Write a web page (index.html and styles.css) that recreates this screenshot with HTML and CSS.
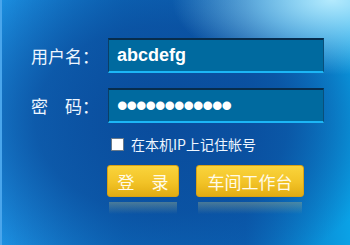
FILE: index.html
```html
<!DOCTYPE html>
<html lang="zh-CN">

<head>
    <meta charset="UTF-8">
    <meta name="viewport" content="width=device-width, initial-scale=1.0">
    <title>登录</title>
    <link rel="stylesheet" href="styles.css">
</head>

<body>

    <!-- Login Panel -->
    <div class="login-panel">
        <form class="login-form">
            <div class="field-row">
                <label class="field-label" for="username">用户名：</label>
                <input class="field-input" id="username" type="text" value="abcdefg">
            </div>
            <div class="field-row">
                <label class="field-label" for="password">密　码：</label>
                <input class="field-input password" id="password" type="password" value="abcdefghijkl">
            </div>
            <div class="remember-row">
                <label class="remember">
                    <input type="checkbox" class="remember-box">
                    <span>在本机IP上记住帐号</span>
                </label>
            </div>
            <div class="button-row">
                <button type="button" class="btn btn-login">登　录</button>
                <button type="button" class="btn btn-workshop">车间工作台</button>
            </div>
        </form>
    </div>

</body>

</html>
```

FILE: styles.css
```css
/* General Styles */
body {
    font-family: "Noto Sans CJK SC", "Liberation Sans", sans-serif;
    margin: 0;
    padding: 0;
}

.login-panel {
    width: 348px;
    height: 245px;
    border-left: 2px solid #4aa6ec;
    overflow: hidden;
    background:
        radial-gradient(ellipse 160px 75px at 330px 0, #b4eafd 0%, rgba(150, 220, 250, 0.65) 45%, rgba(120, 200, 245, 0) 100%),
        radial-gradient(ellipse 230px 170px at 160px 120px, #0a4c9c 0%, rgba(10, 76, 156, 0.75) 55%, rgba(10, 76, 156, 0) 100%),
        linear-gradient(to right, #1c8fe0 0%, #0d6cbd 35%, #0b62b4 70%, #0aa2e6 100%);
}

.login-form {
    padding: 38px 0 0 29px;
}

/* Fields */
.field-row {
    display: flex;
    align-items: center;
    margin-bottom: 15px;
}

.field-label {
    width: 77px;
    color: #eef6ff;
    font-size: 17px;
    line-height: 34px;
}

.field-input {
    box-sizing: border-box;
    width: 216px;
    height: 35px;
    padding: 0 8px;
    background-color: #006a9f;
    border: none;
    border-top: 2px solid #062c4c;
    border-left: 1px solid #0a3f66;
    border-right: 1px solid #0a4f7a;
    border-bottom: 2px solid #1cb6f6;
    color: #fff;
    font-family: "Liberation Sans", Arial, sans-serif;
    font-size: 18px;
    font-weight: bold;
    outline: none;
}

.field-input.password {
    font-size: 30px;
    letter-spacing: -1px;
}

/* Remember */
.remember-row {
    margin: -4px 0 0 80px;
    height: 22px;
}

.remember {
    display: flex;
    align-items: center;
    color: #eef6ff;
    font-size: 14px;
}

.remember-box {
    appearance: none;
    width: 13px;
    height: 13px;
    margin: 0 7px 0 0;
    background-color: #fff;
    border: 1px solid #6a7a8a;
}

/* Buttons */
.button-row {
    display: flex;
    gap: 17px;
    margin: 9px 0 0 76px;
}

.btn {
    position: relative;
    height: 32px;
    padding: 0;
    background: linear-gradient(to bottom, #fad43c 0%, #f2c327 55%, #e2ac12 100%);
    border: 1px solid #d9a214;
    border-radius: 3px;
    color: #fffbe8;
    font-family: "Noto Sans CJK SC", sans-serif;
    font-size: 17px;
    cursor: pointer;
}

.btn::after {
    content: "";
    position: absolute;
    left: 1px;
    right: 1px;
    top: 36px;
    height: 12px;
    background: linear-gradient(to bottom, rgba(150, 170, 140, 0.45), rgba(80, 130, 170, 0));
}

.btn-login {
    width: 72px;
}

.btn-workshop {
    width: 108px;
}
```
